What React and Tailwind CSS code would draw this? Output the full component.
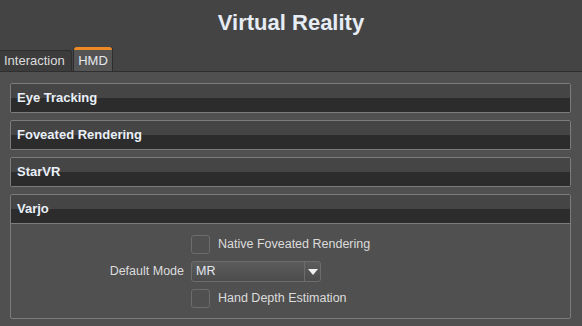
import React from "react";

const Section = ({ title, children }) => (
  <div className="rounded-[2px] border border-[#7c7c7c]">
    <div className="flex h-[28px] items-center bg-[linear-gradient(#454545_0,#454545_50%,#2c2c2c_50%,#2c2c2c_100%)] pl-[6px] text-[13px] font-bold text-[#eaf0f8]">
      {title}
    </div>
    {children}
  </div>
);

const Checkbox = ({ label }) => (
  <div className="flex h-[19px] items-center">
    <div className="h-[19px] w-[19px] rounded-[3px] border border-[#6c6c6c]" />
    <span className="ml-[8px] text-[12.5px] text-[#dcdcdc]">{label}</span>
  </div>
);

export default function App() {
  return (
    <div
      className="flex h-[326px] w-[582px] flex-col overflow-hidden bg-[#505050]"
      style={{ fontFamily: '"Liberation Sans", Arial, sans-serif' }}
    >
      <div className="bg-[#444444]">
        <div className="flex h-[47px] items-center justify-center pb-[2px] text-[22px] font-bold text-[#e6ecf4]">
          Virtual Reality
        </div>
        <div className="flex h-[25px] items-end border-b border-[#2f2f2f]">
          <div className="flex h-[21px] w-[72px] items-center rounded-tr-[3px] border-t border-r border-[#2e2e2e] bg-[#3c3c3c] pl-[4px] text-[13px] text-[#dcdcdc]">
            Interaction
          </div>
          <div className="ml-[1px] flex h-[24px] w-[40px] flex-col rounded-t-[3px] border-x border-[#2e2e2e] bg-[#545454]">
            <div className="h-[3px] rounded-t-[3px] bg-[#ee8a26]" />
            <div className="flex flex-1 items-center justify-center text-[13px] text-[#e4e8ee]">
              HMD
            </div>
          </div>
        </div>
      </div>

      <div className="flex flex-col gap-[7px] pt-[11px] pl-[10px] pr-[11px]">
        <Section title="Eye Tracking" />
        <Section title="Foveated Rendering" />
        <Section title="StarVR" />
        <Section title="Varjo">
          <div className="h-[95px] border-t border-[#7c7c7c] pt-[11px]">
            <div className="flex flex-col gap-[7px]">
              <div className="flex">
                <div className="w-[180px]" />
                <Checkbox label="Native Foveated Rendering" />
              </div>
              <div className="flex items-center">
                <div className="w-[173px] text-right text-[12.5px] text-[#dcdcdc]">
                  Default Mode
                </div>
                <div className="ml-[7px] flex h-[21px] w-[130px] rounded-[3px] border border-[#6c6c6c] bg-[linear-gradient(#5c5c5c,#4c4c4c)]">
                  <div className="flex flex-1 items-center pl-[4px] text-[12.5px] text-[#e4e8ee]">
                    MR
                  </div>
                  <div className="flex w-[16px] items-center justify-center border-l border-[#6c6c6c]">
                    <svg width="10" height="6" viewBox="0 0 10 6">
                      <path d="M0 0 H10 L5 6 Z" fill="#f0f0f0" />
                    </svg>
                  </div>
                </div>
              </div>
              <div className="flex">
                <div className="w-[180px]" />
                <Checkbox label="Hand Depth Estimation" />
              </div>
            </div>
          </div>
        </Section>
      </div>
    </div>
  );
}
